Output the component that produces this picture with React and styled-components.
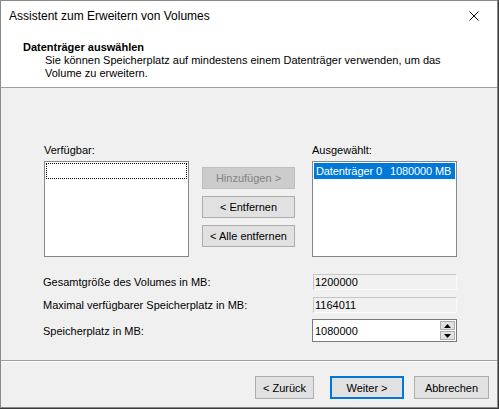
import React from 'react';
import styled, { createGlobalStyle } from 'styled-components';

const GlobalStyle = createGlobalStyle`
    html, body {
        margin: 0;
        padding: 0;
        background: #3a3a3a;
    }
    body {
        width: 499px;
        height: 409px;
        overflow: hidden;
    }
`;

const Window = styled.div`
    width: 496px;
    height: 406px;
    border: 1px solid #8a8a8a;
    background: #f0f0f0;
    display: flex;
    flex-direction: column;
    font-family: "Liberation Sans", Arial, sans-serif;
    font-size: 11px;
    color: #000;
`;

const TitleBar = styled.div`
    height: 30px;
    background: #fff;
    display: flex;
    align-items: center;
    justify-content: space-between;
    padding-left: 8px;
    font-size: 12px;
`;

const CloseButton = styled.div`
    width: 46px;
    height: 30px;
    display: flex;
    align-items: center;
    justify-content: center;
`;

const Header = styled.div`
    height: 57px;
    background: #fff;
    border-bottom: 1px solid #a0a0a0;
    padding: 9px 0 0 22px;
    box-sizing: border-box;
`;

const HeaderTitle = styled.div`
    font-weight: bold;
    line-height: 14px;
`;

const HeaderText = styled.div`
    padding-left: 22px;
    line-height: 13px;
`;

const Body = styled.div`
    flex: 1;
    display: flex;
    flex-direction: column;
    padding: 56px 0 0 42px;
`;

const ListsRow = styled.div`
    display: flex;
    padding-left: 1px;
`;

const ListColumn = styled.div`
    display: flex;
    flex-direction: column;
    width: 145px;
    flex-shrink: 0;
`;

const Label = styled.div`
    height: 17px;
    line-height: 12px;
`;

const ListBox = styled.div`
    height: 96px;
    background: #fff;
    border: 1px solid #828790;
    box-sizing: border-box;
    padding: 1px;
`;

const ListItem = styled.div`
    height: 16px;
    box-sizing: border-box;
    display: flex;
    align-items: center;
    padding-left: 2px;
    white-space: nowrap;
    overflow: hidden;
    letter-spacing: -0.1px;
    background: ${p => (p.$selected ? '#0078d7' : 'transparent')};
    color: ${p => (p.$selected ? '#fff' : '#000')};
    border: ${p => (p.$focus ? '1px dotted #000' : 'none')};
`;

const ItemSize = styled.span`
    margin-left: 8px;
`;

const ButtonColumn = styled.div`
    display: flex;
    flex-direction: column;
    gap: 7px;
    padding-top: 23px;
    margin: 0 17px 0 13px;
`;

const Button = styled.div`
    width: ${p => p.$w || 93}px;
    height: ${p => p.$h || 22}px;
    margin-left: ${p => p.$ml || 0}px;
    box-sizing: border-box;
    display: flex;
    align-items: center;
    justify-content: center;
    white-space: nowrap;
    background: ${p => (p.$disabled ? '#cccccc' : '#e1e1e1')};
    border: ${p => (p.$default ? '2px solid #0078d7' : p.$disabled ? '1px solid #bfbfbf' : '1px solid #adadad')};
    color: ${p => (p.$disabled ? '#838383' : '#000')};
`;

const Fields = styled.div`
    display: flex;
    flex-direction: column;
    margin-top: 17px;
`;

const FieldRow = styled.div`
    display: flex;
    align-items: center;
    justify-content: space-between;
    width: 414px;
    height: ${p => p.$h}px;
    margin-bottom: ${p => p.$mb || 0}px;
`;

const ReadOnly = styled.div`
    width: 144px;
    height: 16px;
    box-sizing: border-box;
    border: 1px solid #c6c6c6;
    border-bottom-color: #fafafa;
    border-right-color: #fafafa;
    background: #f0f0f0;
    padding-left: 1px;
    line-height: 14px;
`;

const SpinBox = styled.div`
    width: 145px;
    height: 23px;
    box-sizing: border-box;
    border: 1px solid #7a7a7a;
    background: #fff;
    display: flex;
    align-items: center;
    justify-content: space-between;
    padding: 0 1px 0 2px;
`;

const SpinButtons = styled.div`
    display: flex;
    flex-direction: column;
    gap: 1px;
`;

const SpinButton = styled.div`
    width: 15px;
    height: 9px;
    box-sizing: border-box;
    border: 1px solid #adadad;
    background: #e1e1e1;
    display: flex;
    align-items: center;
    justify-content: center;
`;

const Separator = styled.div`
    height: 1px;
    background: #a0a0a0;
    border-bottom: 1px solid #fff;
`;

const Footer = styled.div`
    height: 45px;
    display: flex;
    padding: 14px 0 0 254px;
    box-sizing: border-box;
`;

const Arrow = ({ up }) => (
    <svg width="7" height="4" viewBox="0 0 7 4">
        <polygon points={up ? '3.5,0 7,4 0,4' : '0,0 7,0 3.5,4'} fill="#000" />
    </svg>
);

const App = () => {
    return (
        <>
            <GlobalStyle />
            <Window>
                <TitleBar>
                    <span>Assistent zum Erweitern von Volumes</span>
                    <CloseButton>
                        <svg width="10" height="10" viewBox="0 0 10 10">
                            <path d="M0.5 0.5 L9.5 9.5 M9.5 0.5 L0.5 9.5" stroke="#000" strokeWidth="1" />
                        </svg>
                    </CloseButton>
                </TitleBar>
                <Header>
                    <HeaderTitle>Datenträger auswählen</HeaderTitle>
                    <HeaderText>
                        Sie können Speicherplatz auf mindestens einem Datenträger verwenden, um das<br />
                        Volume zu erweitern.
                    </HeaderText>
                </Header>
                <Body>
                    <ListsRow>
                        <ListColumn>
                            <Label>Verfügbar:</Label>
                            <ListBox>
                                <ListItem $focus />
                            </ListBox>
                        </ListColumn>
                        <ButtonColumn>
                            <Button $disabled>Hinzufügen &gt;</Button>
                            <Button>&lt; Entfernen</Button>
                            <Button>&lt; Alle entfernen</Button>
                        </ButtonColumn>
                        <ListColumn>
                            <Label>Ausgewählt:</Label>
                            <ListBox>
                                <ListItem $selected>
                                    Datenträger 0<ItemSize>1080000 MB</ItemSize>
                                </ListItem>
                            </ListBox>
                        </ListColumn>
                    </ListsRow>
                    <Fields>
                        <FieldRow $h={16} $mb={7}>
                            <span>Gesamtgröße des Volumes in MB:</span>
                            <ReadOnly>1200000</ReadOnly>
                        </FieldRow>
                        <FieldRow $h={16} $mb={6}>
                            <span>Maximal verfügbarer Speicherplatz in MB:</span>
                            <ReadOnly>1164011</ReadOnly>
                        </FieldRow>
                        <FieldRow $h={23}>
                            <span>Speicherplatz in MB:</span>
                            <SpinBox>
                                <span>1080000</span>
                                <SpinButtons>
                                    <SpinButton><Arrow up /></SpinButton>
                                    <SpinButton><Arrow /></SpinButton>
                                </SpinButtons>
                            </SpinBox>
                        </FieldRow>
                    </Fields>
                </Body>
                <Separator />
                <Footer>
                    <Button $w={59} $h={23}>&lt; Zurück</Button>
                    <Button $w={74} $h={23} $ml={16} $default>Weiter &gt;</Button>
                    <Button $w={75} $h={23} $ml={10}>Abbrechen</Button>
                </Footer>
            </Window>
        </>
    );
};

export default App;
